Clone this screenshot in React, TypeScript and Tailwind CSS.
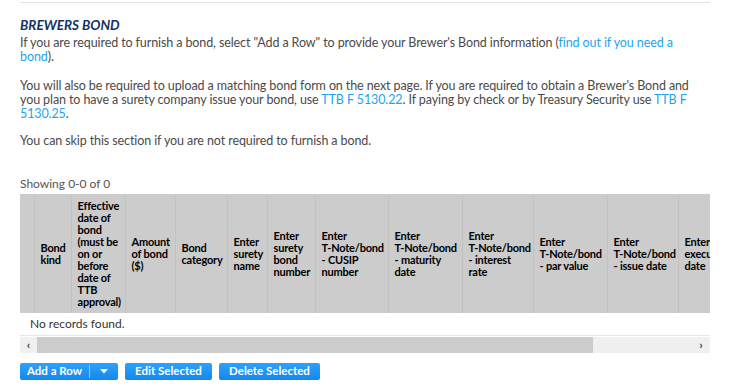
const columns: { label: string; width: number }[] = [
    { label: "Bond kind", width: 37 },
    { label: "Effective date of bond (must be on or before date of TTB approval)", width: 54 },
    { label: "Amount of bond ($)", width: 50 },
    { label: "Bond category", width: 52 },
    { label: "Enter surety name", width: 40 },
    { label: "Enter surety bond number", width: 48 },
    { label: "Enter T-Note/bond - CUSIP number", width: 73 },
    { label: "Enter T-Note/bond - maturity date", width: 74 },
    { label: "Enter T-Note/bond - interest rate", width: 71 },
    { label: "Enter T-Note/bond - par value", width: 74 },
    { label: "Enter T-Note/bond - issue date", width: 71 },
    { label: "Enter execution date", width: 60 },
    { label: "Enter bond expiration date", width: 70 },
]

const linkCls = "text-[#1fa3ec]"
const btnCls = "flex h-[17px] items-center rounded-[2px] bg-gradient-to-b from-[#2da2fb] to-[#1288ee]"

// keep words like "T-Note/bond" from breaking at the hyphen
const Label = ({ text }: { text: string }) => (
    <>
        {text.split(" ").map((w, i) => (
            <span key={i}>
                {i > 0 && " "}
                <span className="whitespace-nowrap">{w}</span>
            </span>
        ))}
    </>
)

const App = () => {
    const totalWidth = 14 + columns.reduce((s, c) => s + c.width, 0)

    return (
        <div className="w-[732px] h-[389px] bg-white overflow-hidden font-['Lato',sans-serif] text-[#4a4a4a]">
            <div className="ml-[20px] w-[690px] pt-[2px]">
                <div className="border-t border-[#e3e3e3]" />

                <h2 className="mt-[14px] text-[13.5px] leading-[16px] font-bold italic text-[#13335f]">BREWERS BOND</h2>

                <div className="mt-[3px] w-[680px] text-[12.5px] leading-[14px] tracking-[-0.1px]">
                    <p className="mb-[15px]">
                        If you are required to furnish a bond, select "Add a Row" to provide your Brewer's Bond information (
                        <a className={linkCls}>find out if you need a bond</a>).
                    </p>
                    <p className="mb-[13px]">
                        You will also be required to upload a matching bond form on the next page. If you are required to obtain a Brewer's Bond and you plan to have a surety company issue your bond, use{" "}
                        <a className={linkCls}>TTB F 5130.22</a>. If paying by check or by Treasury Security use{" "}
                        <a className={linkCls}>TTB F 5130.25</a>.
                    </p>
                    <p>You can skip this section if you are not required to furnish a bond.</p>
                </div>

                <div className="mt-[29px] text-[12px] leading-[14px] text-[#555]">Showing 0-0 of 0</div>

                <div className="mt-[3px] w-[690px] overflow-hidden">
                    <table className="table-fixed border-collapse" style={{ width: totalWidth }}>
                        <colgroup>
                            <col className="w-[14px]" />
                            {columns.map((c) => (
                                <col key={c.label} style={{ width: c.width }} />
                            ))}
                        </colgroup>
                        <thead>
                            <tr className="h-[119px] bg-[#cccccc]">
                                <th className="border-r border-[#c2c2c2]" />
                                {columns.map((c, i) => (
                                    <th
                                        key={c.label}
                                        className={`border-r border-[#c2c2c2] pl-[6px] ${i === 1 ? "pr-0" : "pr-[5px]"} align-middle text-left text-[11px] leading-[12px] tracking-[-0.2px] font-bold text-black`}
                                    >
                                        <Label text={c.label} />
                                    </th>
                                ))}
                            </tr>
                        </thead>
                        <tbody>
                            <tr className="h-[22px] border-b border-[#e6e6e6]">
                                <td colSpan={columns.length + 1} className="pl-[10px] text-[12px] text-[#333]">
                                    No records found.
                                </td>
                            </tr>
                        </tbody>
                    </table>
                </div>

                {/* scrollbar */}
                <div className="mt-[1px] flex h-[16px] bg-[#f0f0f0]">
                    <div className="flex w-[17px] items-center justify-center text-[12px] font-bold text-[#444]">‹</div>
                    <div className="w-[556px] bg-[#cdcdcd]" />
                    <div className="flex-1" />
                    <div className="flex w-[18px] items-center justify-center text-[12px] font-bold text-[#444]">›</div>
                </div>

                <div className="mt-[10px] flex gap-[7px] text-[11.5px] font-bold text-white">
                    <div className={btnCls}>
                        <span className="flex w-[69px] justify-center">Add a Row</span>
                        <span className="h-[13px] border-l border-[#8cc8fa]" />
                        <span className="flex w-[28px] justify-center">
                            <svg width="8" height="5" viewBox="0 0 8 5">
                                <path d="M0 0 L8 0 L4 4.5 Z" fill="white" />
                            </svg>
                        </span>
                    </div>
                    <div className={`${btnCls} w-[87px] justify-center`}>Edit Selected</div>
                    <div className={`${btnCls} w-[101px] justify-center`}>Delete Selected</div>
                </div>
            </div>
        </div>
    )
}

export default App
